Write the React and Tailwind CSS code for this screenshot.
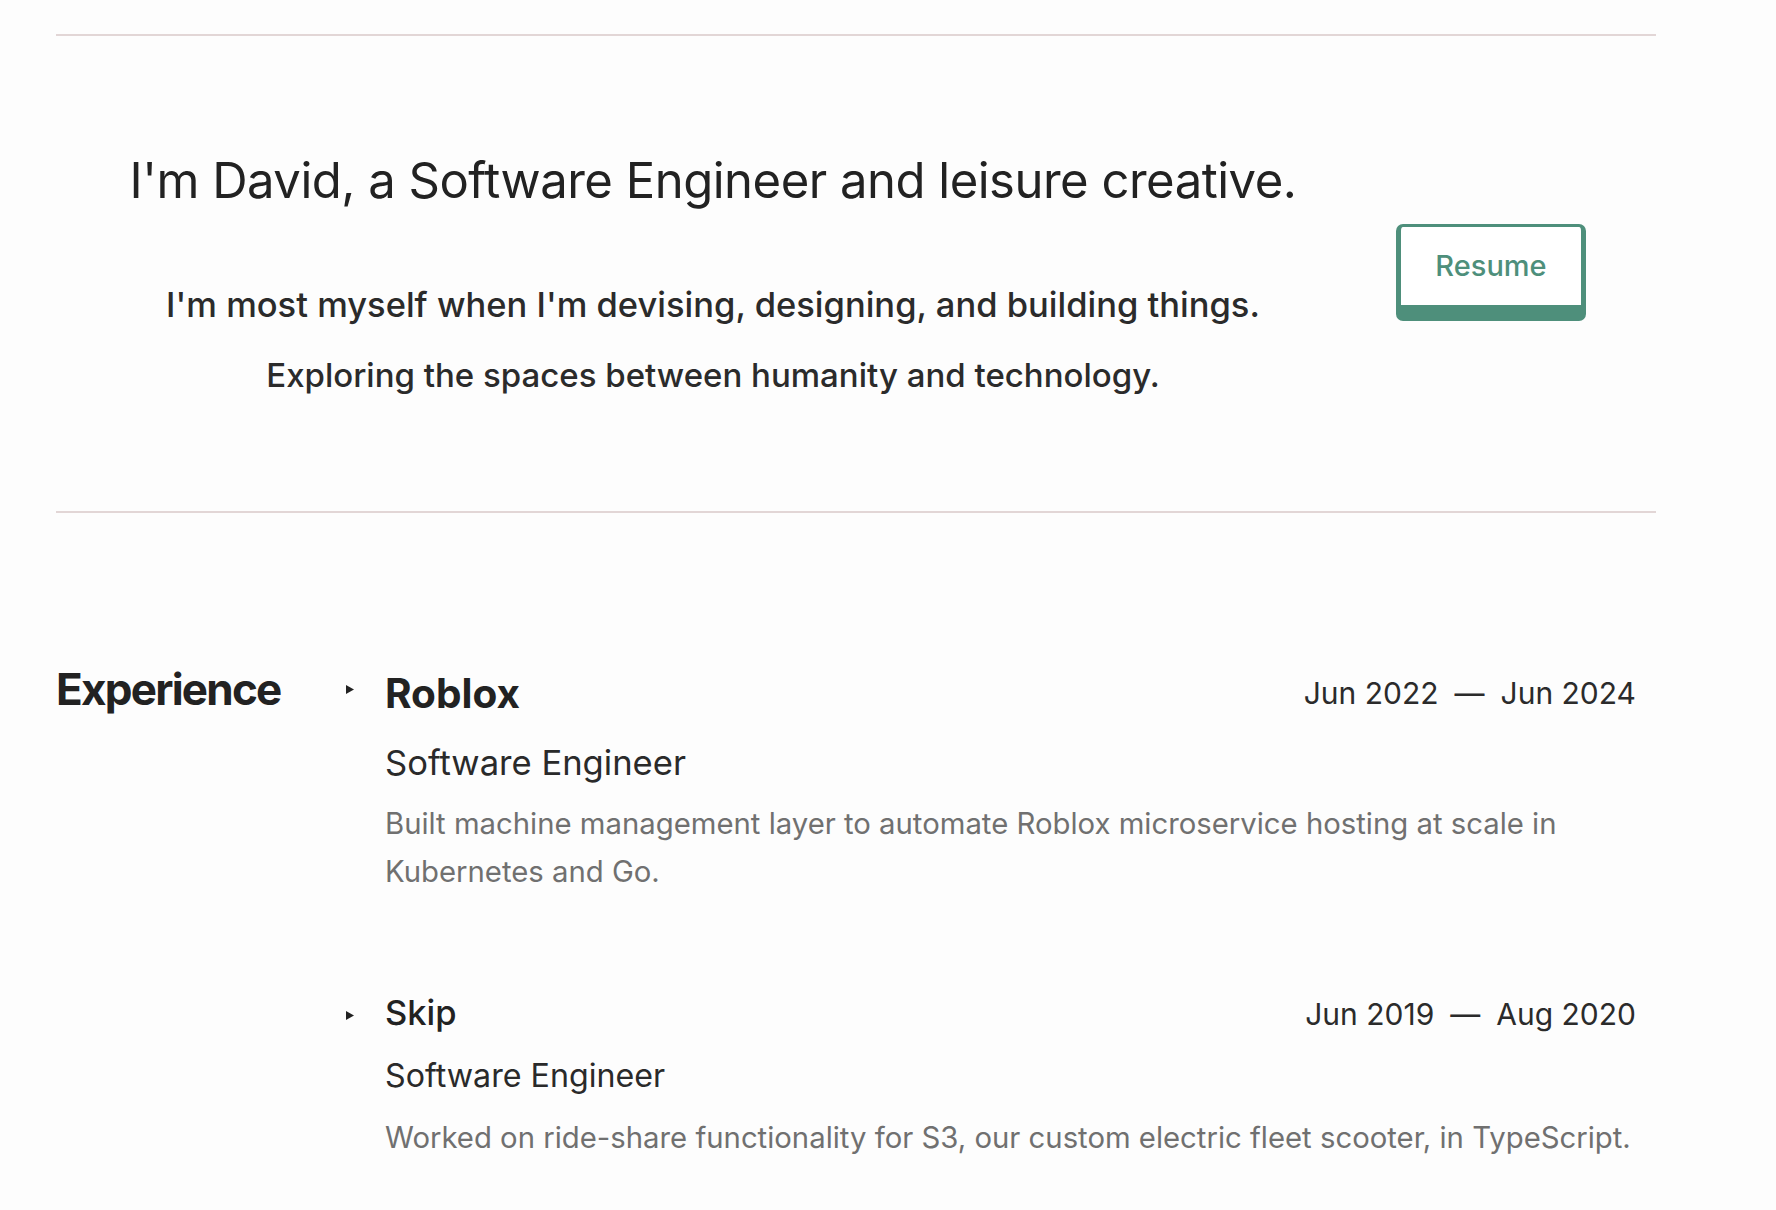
import React from 'react'

const jobs = [
  {
    company: 'Roblox',
    role: 'Software Engineer',
    start: 'Jun 2022',
    end: 'Jun 2024',
    desc: 'Built machine management layer to automate Roblox microservice hosting at scale in Kubernetes and Go.',
    open: true,
  },
  {
    company: 'Skip',
    role: 'Software Engineer',
    start: 'Jun 2019',
    end: 'Aug 2020',
    desc: 'Worked on ride-share functionality for S3, our custom electric fleet scooter, in TypeScript.',
    open: false,
  },
]

function Caret() {
  return (
    <svg width="8" height="9" viewBox="0 0 8 9" className="fill-[#222]">
      <path d="M0 0 L8 4.5 L0 9 Z" />
    </svg>
  )
}

function Job({ job }) {
  const open = job.open
  return (
    <div className={open ? '' : 'mt-[95px]'}>
      {/* 헤더 줄 */}
      <div className="flex items-start justify-between">
        <div className="flex items-center">
          <div className={open ? 'w-[39px] mb-[9px]' : 'w-[39px] mt-[4px]'}>
            <Caret />
          </div>
          <h3
            className={
              open
                ? 'text-[40.5px] leading-[48px] font-bold text-[#222]'
                : 'text-[34.5px] leading-[44px] font-medium text-[#222]'
            }
          >
            {job.company}
          </h3>
        </div>
        <div className="mt-[3px] flex gap-[16px] text-[30px] leading-[40px] text-[#2b2b2b]">
          <span>{job.start}</span>
          <span>—</span>
          <span>{job.end}</span>
        </div>
      </div>

      <div className="pl-[39px]">
        <p
          className={
            open
              ? 'mt-[24px] text-[34.6px] leading-[40px] text-[#2a2a2a]'
              : 'mt-[21px] text-[32.2px] leading-[40px] text-[#2a2a2a]'
          }
        >
          {job.role}
        </p>
        <p className="mt-[18px] text-[29.3px] leading-[48px] text-[#707070]">
          {job.desc}
        </p>
      </div>
    </div>
  )
}

export default function App() {
  return (
    <div className="min-h-screen bg-[#fdfdfd] text-[#222] font-['Inter','Noto_Sans',sans-serif]">
      <div className="ml-[56px] w-[1600px] pt-[34px]">
        <div className="h-[2px] bg-[#e2d6d6]" />

        {/* 소개 섹션 */}
        <section className="flex">
          <div className="w-[1314px] text-center pb-[116px]">
            <h1 className="mt-[115px] text-[49px] leading-[60px] font-normal tracking-[-0.01em]">
              I'm David, a Software Engineer and leisure creative.
            </h1>
            <p className="mt-[74px] text-[34.5px] leading-[40px] font-medium text-[#2b2b2b]">
              I'm most myself when I'm devising, designing, and building things.
            </p>
            <p className="mt-[30px] text-[33px] leading-[40px] font-medium text-[#2b2b2b]">
              Exploring the spaces between humanity and technology.
            </p>
          </div>
          <div className="ml-[26px] pt-[188px]">
            <button className="w-[190px] h-[97px] rounded-[7px] border-[#4e8f7b] border-t-[3px] border-x-[5px] border-b-[16px] bg-white text-[29px] font-medium text-[#4e8f7b]">
              Resume
            </button>
          </div>
        </section>

        <div className="h-[2px] bg-[#e2d6d6]" />

        {/* 경력 섹션 */}
        <section className="flex pt-[150px]">
          <h2 className="w-[290px] text-[44px] leading-[52px] font-bold tracking-[-0.04em] text-[#222]">
            Experience
          </h2>
          <div className="flex-1 pt-[7px] pr-[20px]">
            {jobs.map((job) => (
              <Job key={job.company} job={job} />
            ))}
          </div>
        </section>
      </div>
    </div>
  )
}
